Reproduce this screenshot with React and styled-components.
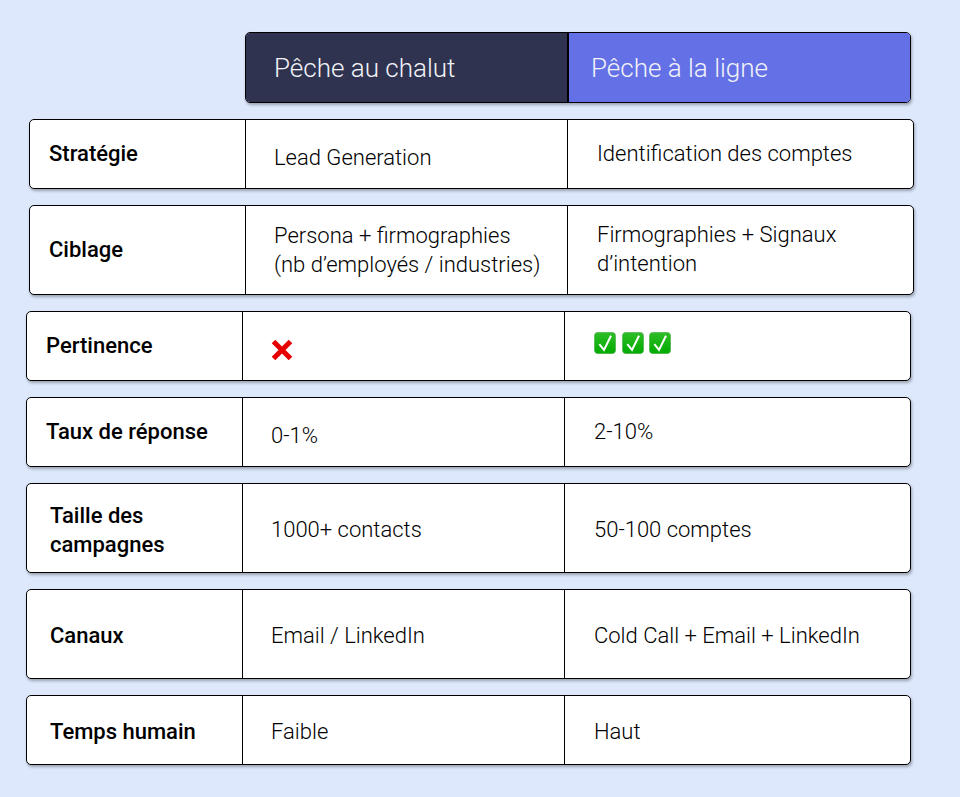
import React from "react";
import styled, { createGlobalStyle } from "styled-components";

const GlobalStyle = createGlobalStyle`
  html, body {
    margin: 0;
    padding: 0;
    background: #dde8fd;
  }
  body {
    font-family: Roboto, "Liberation Sans", sans-serif;
  }
`;

const Page = styled.div`
  width: 960px;
  height: 797px;
  box-sizing: border-box;
  padding-top: 32px;
  display: flex;
  flex-direction: column;
  gap: 16px;
  overflow: hidden;
`;

const HeaderRow = styled.div`
  display: grid;
  grid-template-columns: 321px 1fr;
  width: 666px;
  height: 71px;
  margin-left: 245px;
  box-sizing: border-box;
  border: 1px solid #000;
  border-radius: 5px;
  overflow: hidden;
  box-shadow: 1px 2px 3px rgba(0, 0, 0, 0.3);
`;

const HeaderCell = styled.div`
  display: flex;
  align-items: center;
  padding-left: ${(p) => p.$pad}px;
  background: ${(p) => p.$bg};
  color: #f2f3f8;
  font-size: 26px;
  font-weight: 300;
  & + & {
    border-left: 2px solid #000;
  }
`;

const Row = styled.div`
  display: grid;
  grid-template-columns: 215px 322px 1fr;
  width: 885px;
  height: ${(p) => p.$height}px;
  margin-left: ${(p) => p.$left}px;
  box-sizing: border-box;
  border: 1px solid #000;
  border-radius: 5px;
  background: #fff;
  box-shadow: 1px 2px 3px rgba(0, 0, 0, 0.3);
`;

const Label = styled.div`
  display: flex;
  align-items: center;
  padding-left: ${(p) => p.$pad}px;
  padding-top: ${(p) => p.$down || 0}px;
  padding-bottom: ${(p) => p.$up || 0}px;
  color: #000;
  font-size: 22px;
  font-weight: 500;
  line-height: 29px;
`;

const Cell = styled.div`
  display: flex;
  align-items: center;
  gap: 5.5px;
  box-sizing: border-box;
  border-left: 1px solid #000;
  padding-left: ${(p) => p.$pad}px;
  padding-top: ${(p) => p.$down || 0}px;
  padding-bottom: ${(p) => p.$up || 0}px;
  color: #000;
  font-size: 22px;
  font-weight: 300;
  line-height: 29px;
`;

const CrossMark = () => (
  <svg width="22" height="22" viewBox="0 0 22 22">
    <path d="M2.5 2.5 19.5 19.5M19.5 2.5 2.5 19.5" stroke="#e60000" strokeWidth="5" />
  </svg>
);

const CheckMark = () => (
  <svg width="22" height="22" viewBox="0 0 22 22">
    <defs>
      <linearGradient id="checkFill" x1="0" y1="0" x2="0" y2="1">
        <stop offset="0" stopColor="#2fbd28" />
        <stop offset="1" stopColor="#00ab00" />
      </linearGradient>
    </defs>
    <rect x="0.3" y="0.3" width="21.4" height="21.4" rx="4" fill="url(#checkFill)" stroke="#5fae5f" strokeWidth="0.6" />
    <path d="M5.3 12.2 10 18 17 3.7" fill="none" stroke="#fff" strokeWidth="2" />
  </svg>
);

const App = () => (
  <Page>
    <GlobalStyle />
    <HeaderRow>
      <HeaderCell $bg="#2f3350" $pad={28}>Pêche au chalut</HeaderCell>
      <HeaderCell $bg="#6370e6" $pad={22}>Pêche à la ligne</HeaderCell>
    </HeaderRow>
    <Row $left={29} $height={70}>
      <Label $pad={19} $up={2}>Stratégie</Label>
      <Cell $pad={28} $down={6}>Lead Generation</Cell>
      <Cell $pad={29} $up={2}>Identification des comptes</Cell>
    </Row>
    <Row $left={29} $height={90}>
      <Label $pad={19} $up={2}>Ciblage</Label>
      <Cell $pad={28}><span>Persona + firmographies<br />(nb d’employés / industries)</span></Cell>
      <Cell $pad={29} $up={2}><span>Firmographies + Signaux<br />d’intention</span></Cell>
    </Row>
    <Row $left={26} $height={70}>
      <Label $pad={19} $up={2}>Pertinence</Label>
      <Cell $pad={28} $down={8}><CrossMark /></Cell>
      <Cell $pad={29} $up={6}><CheckMark /><CheckMark /><CheckMark /></Cell>
    </Row>
    <Row $left={26} $height={70}>
      <Label $pad={19} $up={2}>Taux de réponse</Label>
      <Cell $pad={28} $down={6}>0-1%</Cell>
      <Cell $pad={29} $up={2}>2-10%</Cell>
    </Row>
    <Row $left={26} $height={90}>
      <Label $pad={23} $down={4}>Taille des<br />campagnes</Label>
      <Cell $pad={28} $down={2}>1000+ contacts</Cell>
      <Cell $pad={29} $down={2}>50-100 comptes</Cell>
    </Row>
    <Row $left={26} $height={90}>
      <Label $pad={23} $down={2}>Canaux</Label>
      <Cell $pad={28} $down={2}>Email / LinkedIn</Cell>
      <Cell $pad={29} $down={2}>Cold Call + Email + LinkedIn</Cell>
    </Row>
    <Row $left={26} $height={70}>
      <Label $pad={23} $down={2}>Temps humain</Label>
      <Cell $pad={28} $down={2}>Faible</Cell>
      <Cell $pad={29} $down={2}>Haut</Cell>
    </Row>
  </Page>
);

export default App;
